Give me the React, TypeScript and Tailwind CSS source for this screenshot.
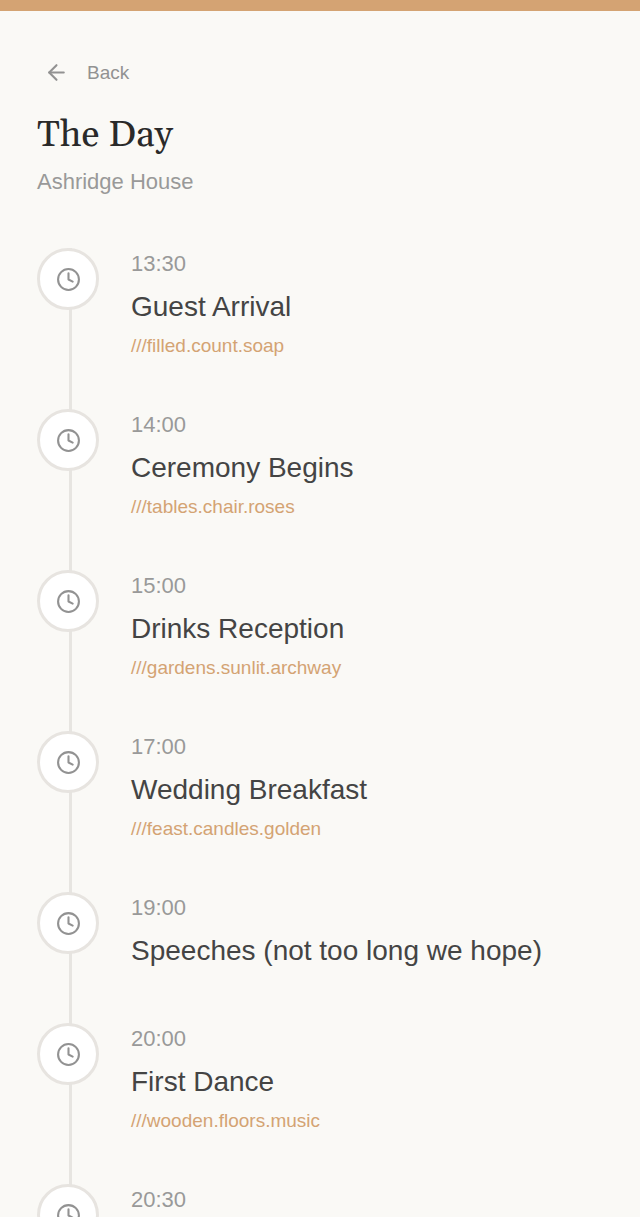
import { ArrowLeft, Clock } from 'lucide-react';

interface ScheduleItem {
  time: string;
  title: string;
  location?: string;
}

const schedule: ScheduleItem[] = [
  { time: '13:30', title: 'Guest Arrival', location: 'filled.count.soap' },
  { time: '14:00', title: 'Ceremony Begins', location: 'tables.chair.roses' },
  { time: '15:00', title: 'Drinks Reception', location: 'gardens.sunlit.archway' },
  { time: '17:00', title: 'Wedding Breakfast', location: 'feast.candles.golden' },
  { time: '19:00', title: 'Speeches (not too long we hope)' },
  { time: '20:00', title: 'First Dance', location: 'wooden.floors.music' },
  { time: '20:30', title: '' },
];

function TimelineRow({ item }: { item: ScheduleItem }) {
  return (
    <li className="relative flex gap-8 pb-[50px]">
      {/* Connector behind the circle */}
      <div className="absolute top-0 bottom-0 left-8 w-[3px] bg-[#e7e5e1]" />
      <div className="relative flex size-[62px] shrink-0 items-center justify-center rounded-full border-3 border-[#e7e4e0] bg-white">
        <Clock className="size-[25px] text-[#929292]" />
      </div>
      <div className="min-w-0 flex-1">
        <p className="text-[22px] leading-[31px] text-[#999999]">{item.time}</p>
        {item.title && (
          <h2 className="mt-[6px] text-[28px] leading-[44px] text-[#444444]">{item.title}</h2>
        )}
        {item.location && (
          <a
            href={`https://what3words.com/${item.location}`}
            className="mt-1 block text-[19px] leading-[26px] text-[#d4a373]"
          >
            {`///${item.location}`}
          </a>
        )}
      </div>
    </li>
  );
}

export default function App() {
  return (
    <div className="h-screen overflow-y-auto border-t-11 border-[#d4a373] bg-[#faf9f6] font-['Liberation_Sans',Arial,sans-serif] [scrollbar-width:none]">
      <main className="px-[37px] pt-[46px]">
        <button type="button" className="flex items-center gap-[18px] px-[7px] text-[19px] leading-[31px] text-[#929292]">
          <ArrowLeft className="size-[25px]" />
          Back
        </button>

        <header className="mt-6">
          <h1 className="font-[Gelasio,Georgia,'Liberation_Serif',serif] text-[37px] leading-[48px] text-[#2a2a2a]">
            The Day
          </h1>
          <p className="mt-[7px] text-[22px] leading-[30px] text-[#999999]">Ashridge House</p>
        </header>

        <ol className="mt-[51px]">
          {schedule.map((item) => (
            <TimelineRow key={item.time} item={item} />
          ))}
        </ol>
      </main>
    </div>
  );
}
